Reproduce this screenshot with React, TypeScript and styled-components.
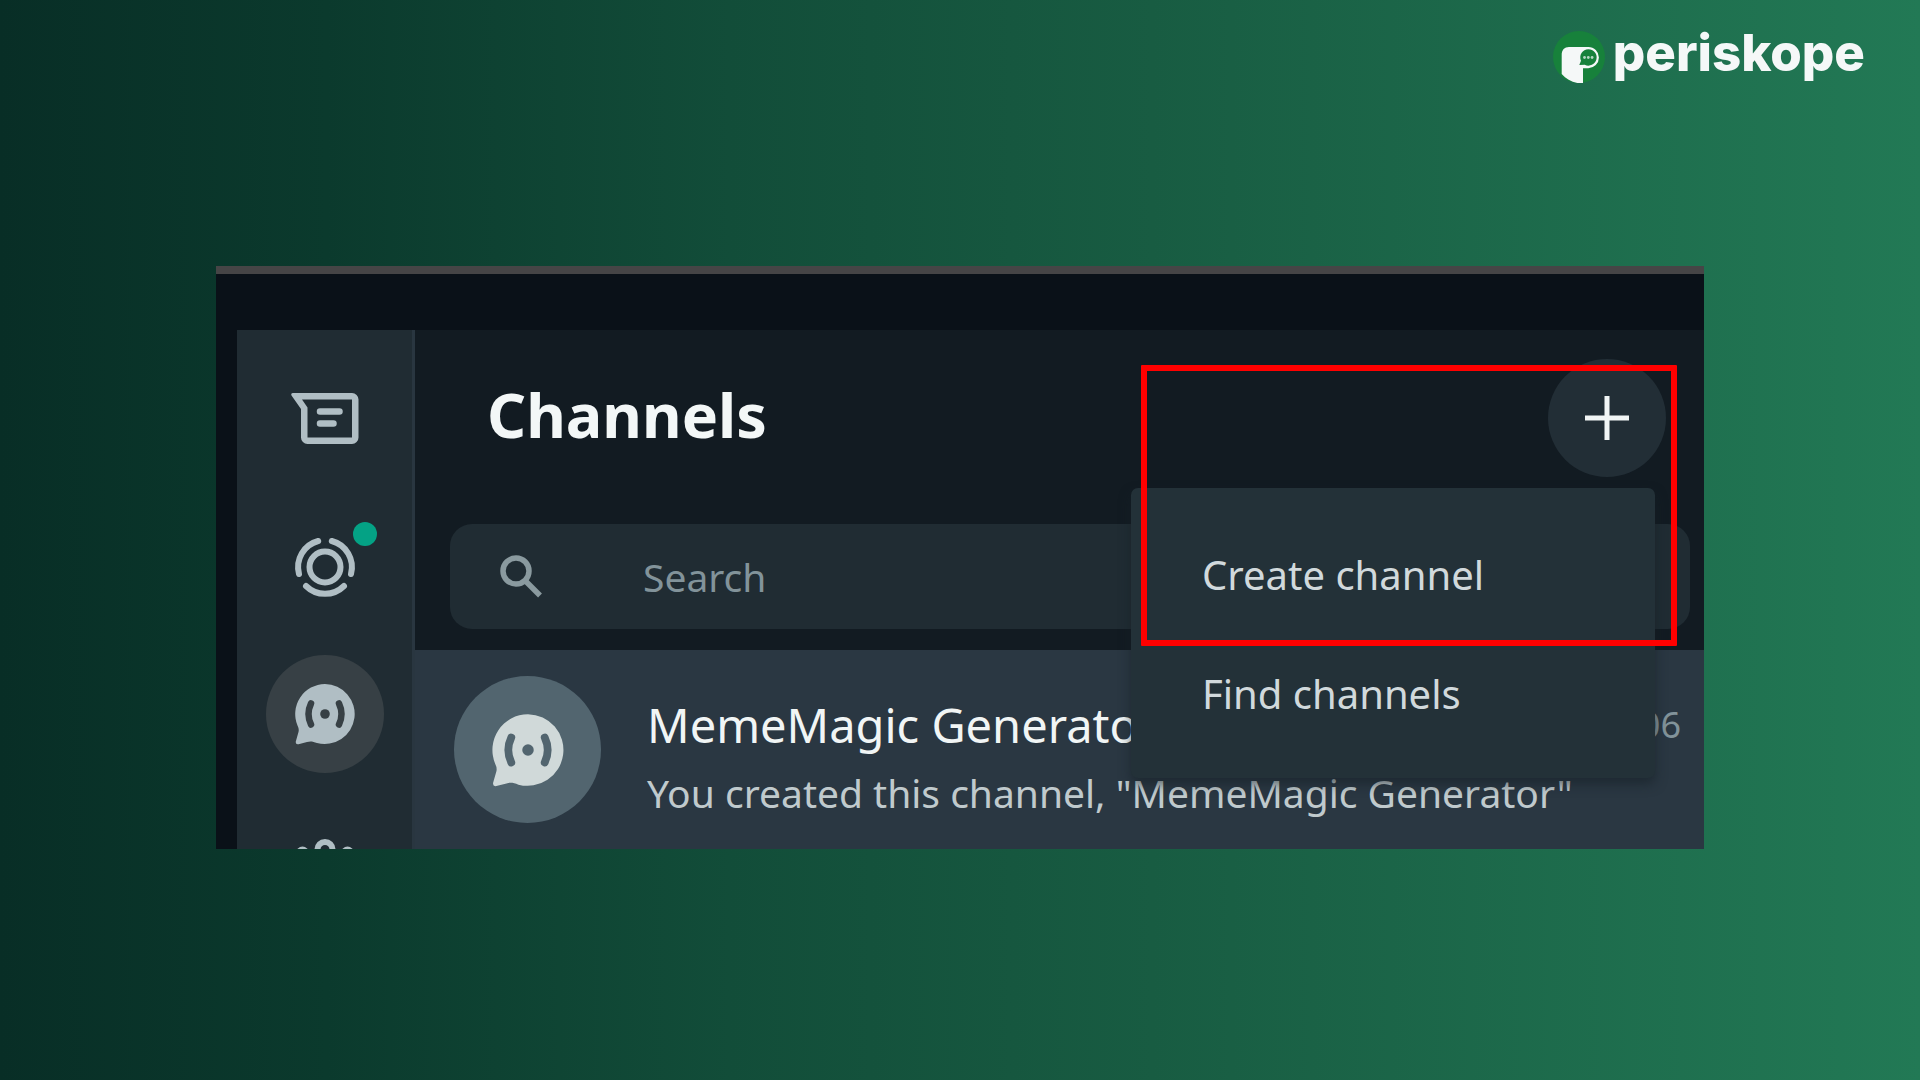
import React from "react";
import styled, { createGlobalStyle } from "styled-components";

const GlobalStyle = createGlobalStyle`
  *, *::before, *::after { box-sizing: border-box; }
  body {
    margin: 0;
    background: #0a3128;
    font-family: "Noto Sans", "Open Sans", sans-serif;
  }
  button { border: 0; padding: 0; background: none; font: inherit; color: inherit; cursor: pointer; }
  h1, h2, p { margin: 0; }
`;

const Page = styled.main`
  min-height: 100vh;
  display: flex;
  flex-direction: column;
  gap: 183px;
  padding: 31px 0;
  background: linear-gradient(90deg, #082e26 0%, #0b3a2d 17%, #124d39 38%, #185c42 60%, #227955 100%);
`;

const Brand = styled.header`
  display: flex;
  justify-content: flex-end;
  align-items: flex-start;
  gap: 8px;
  padding: 0 55px;
`;

const BrandName = styled.span`
  font-family: Inter, sans-serif;
  font-weight: 800;
  font-size: 51px;
  line-height: 44px;
  color: #f5f8f8;
`;

const Frame = styled.section`
  margin: 0 216px;
  border-top: 8px solid #464546;
  background: #0a1118;
  padding: 56px 0 0 21px;
  display: flex;
  overflow: hidden;
`;

const Nav = styled.nav`
  contain: size;
  flex: none;
  width: 178px;
  border-right: 3px solid #293640;
  background: #202c33;
  color: #b0bec4;
  display: flex;
  flex-direction: column;
  align-items: center;
  gap: 30px;
  padding-top: 29px;
`;

const RoundButton = styled.button<{ $fill?: string }>`
  position: relative;
  flex: none;
  width: 118px;
  height: 118px;
  border-radius: 50%;
  background: ${(p) => p.$fill ?? "transparent"};
  display: grid;
  place-items: center;
`;

const UnreadDot = styled.span`
  position: absolute;
  top: 15px;
  right: 7px;
  width: 24px;
  height: 24px;
  border-radius: 50%;
  background: #04a285;
`;

const Panel = styled.div`
  flex: 1;
  min-width: 0;
  background: #121b22;
`;

const PanelHeader = styled.div`
  display: flex;
  justify-content: space-between;
  align-items: flex-start;
  padding: 29px 38px 29px 72px;
`;

const Title = styled.h1`
  font-size: 61px;
  line-height: 112px;
  font-weight: 700;
  color: #f3f7f7;
`;

const MenuAnchor = styled.div`
  position: relative;
  z-index: 1;
  color: #f1f5f5;
`;

const Menu = styled.div`
  position: absolute;
  top: 129px;
  right: 11px;
  width: 524px;
  padding: 27px 0 25px;
  border-radius: 7px;
  background: #233138;
  box-shadow: 0 6px 12px rgba(22, 32, 38, 0.6);
`;

const MenuItem = styled.button`
  display: block;
  width: 100%;
  padding: 0 71px;
  text-align: left;
  font-size: 40px;
  line-height: 119px;
  color: #d1d9dc;
`;

const Highlight = styled.div`
  position: absolute;
  top: 6px;
  right: -11px;
  width: 536px;
  height: 281px;
  border: 6px solid #ff0000;
  border-radius: 1px;
  pointer-events: none;
`;

const SearchBox = styled.label`
  display: flex;
  align-items: center;
  gap: 98px;
  height: 105px;
  margin: 18px 14px 21px 35px;
  padding: 0 47px;
  border-radius: 22px;
  background: #202c33;
  color: #8a9a9f;
`;

const SearchInput = styled.input`
  flex: 1;
  min-width: 0;
  border: 0;
  outline: 0;
  padding: 0;
  background: transparent;
  font: inherit;
  font-size: 39px;
  color: #d1d9dc;
  &::placeholder { color: #82939a; opacity: 1; }
`;

const ChannelRow = styled.article`
  display: flex;
  align-items: center;
  gap: 46px;
  padding: 26px 23px 26px 39px;
  background: #2a3742;
`;

const Avatar = styled.span`
  flex: none;
  width: 147px;
  height: 147px;
  border-radius: 50%;
  background: #52656f;
  color: #d0d9d9;
  display: grid;
  place-items: center;
`;

const ChannelText = styled.div`
  flex: 1;
  min-width: 0;
  display: flex;
  flex-direction: column;
  gap: 10px;
  padding-top: 12px;
`;

const ChannelHead = styled.div`
  display: flex;
  align-items: center;
  justify-content: space-between;
`;

const ChannelName = styled.h2`
  font-size: 47px;
  line-height: 64px;
  font-weight: 400;
  color: #f1f5f5;
`;

const Time = styled.time`
  font-size: 36px;
  line-height: 56px;
  color: #82939a;
`;

const LastMessage = styled.p`
  font-size: 39px;
  line-height: 52px;
  white-space: nowrap;
  color: #c0cacd;
`;

const BrandMark = () => (
  <svg width="52" height="52" viewBox="0 0 52 52" aria-hidden="true">
    <circle cx="26" cy="26" r="26" fill="#17813b" />
    <path
      fill="#f5f8f8"
      d="M16 16H35.3a10.6 10.6 0 0 1 0 21.2H30V52.5C21 52.5 14 49 8.700 43V23.5C8.7 19 11.500 16 16 16Z"
    />
    <path fill="#17813b" d="M35.300 18.200a8.200 8.200 0 1 1-3.600 15.500L26.300 34l1.700-4.200a8.200 8.200 0 0 1 7.300-11.600Z" />
    <g fill="#b5d6c2">
      <circle cx="31.500" cy="26.500" r="1.400" />
      <circle cx="35.300" cy="26.500" r="1.400" />
      <circle cx="39.100" cy="26.500" r="1.400" />
    </g>
  </svg>
);

const ChatsIcon = () => (
  <svg width="72" height="72" viewBox="0 0 72 72" fill="none" aria-hidden="true">
    <path
      fill="currentColor"
      fillRule="evenodd"
      d="M4 11H63a6.500 6.500 0 0 1 6.500 6.500V55.500a6.500 6.500 0 0 1-6.500 6.500H18.500a6.500 6.500 0 0 1-6.500-6.500V27L2.500 13.500Q1.500 11 4 11ZM13 17.500 18.500 25.500V55.500H63V17.500Z"
    />
    <path stroke="currentColor" strokeWidth="6.500" strokeLinecap="round" d="M31 29.500H50.500M31 41.500H44.500" />
  </svg>
);

const StatusIcon = () => (
  <svg width="72" height="72" viewBox="0 0 72 72" fill="none" stroke="currentColor" strokeWidth="6" strokeLinecap="round" aria-hidden="true">
    <circle cx="36" cy="37" r="15.500" />
    <path d="M29.200 11A27 27 0 0 0 10 44" />
    <path d="M42.800 11A27 27 0 0 1 62 44" />
    <path d="M17 56A27 27 0 0 0 55 56" />
  </svg>
);

const ChannelsIcon = ({ size, ink }: { size: number; ink: string }) => (
  <svg width={size} height={size} viewBox="0 0 72 72" fill="none" aria-hidden="true">
    <path
      fill="currentColor"
      d="M36 6a30 30 0 1 1-8 59C24 63.500 21.500 63 18 64L9.500 66.200Q6.300 66.700 6.800 63.500L9.500 54Q10.300 51 8.500 47.500A30 30 0 0 1 36 6Z"
    />
    <path stroke={ink} strokeWidth="6.500" strokeLinecap="round" d="M22 25.500Q17 36 22 46.500M50 25.500Q55 36 50 46.500" />
    <circle cx="36" cy="36" r="4.800" fill={ink} />
  </svg>
);

const CommunitiesIcon = () => (
  <svg width="72" height="72" viewBox="0 0 72 72" fill="none" stroke="currentColor" strokeWidth="6" aria-hidden="true">
    <circle cx="36" cy="23.500" r="7.500" />
    <circle cx="13.500" cy="27" r="3.500" />
    <circle cx="58.500" cy="27" r="3.500" />
    <path d="M20 56v-5q0-10 16-10t16 10v5ZM20 56H5v-5q0-7 10-8M52 56h15v-5q0-7-10-8" />
  </svg>
);

const SearchIcon = () => (
  <svg width="48" height="48" viewBox="0 0 48 48" fill="none" stroke="currentColor" strokeWidth="5.500" aria-hidden="true">
    <circle cx="19" cy="18" r="13" />
    <path d="M28 27.500 43 42.500" />
  </svg>
);

const PlusIcon = () => (
  <svg width="44" height="44" viewBox="0 0 44 44" fill="none" stroke="currentColor" strokeWidth="5" aria-hidden="true">
    <path d="M22 0V44M0 22H44" />
  </svg>
);

export default function App() {
  return (
    <>
      <GlobalStyle />
      <Page>
        <Brand>
          <BrandMark />
          <BrandName>periskope</BrandName>
        </Brand>
        <Frame>
          <Nav>
            <RoundButton aria-label="Chats">
              <ChatsIcon />
            </RoundButton>
            <RoundButton aria-label="Status">
              <StatusIcon />
              <UnreadDot />
            </RoundButton>
            <RoundButton aria-label="Channels" $fill="#374045">
              <ChannelsIcon size={72} ink="#374045" />
            </RoundButton>
            <RoundButton aria-label="Communities">
              <CommunitiesIcon />
            </RoundButton>
          </Nav>
          <Panel>
            <PanelHeader>
              <Title>Channels</Title>
              <MenuAnchor>
                <RoundButton aria-label="New" $fill="#222e36">
                  <PlusIcon />
                </RoundButton>
                <Menu>
                  <MenuItem>Create channel</MenuItem>
                  <MenuItem>Find channels</MenuItem>
                </Menu>
                <Highlight />
              </MenuAnchor>
            </PanelHeader>
            <SearchBox>
              <SearchIcon />
              <SearchInput type="text" placeholder="Search" aria-label="Search" />
            </SearchBox>
            <ChannelRow>
              <Avatar>
                <ChannelsIcon size={86} ink="#52656f" />
              </Avatar>
              <ChannelText>
                <ChannelHead>
                  <ChannelName>MemeMagic Generator</ChannelName>
                  <Time>06</Time>
                </ChannelHead>
                <LastMessage>You created this channel, "MemeMagic Generator"</LastMessage>
              </ChannelText>
            </ChannelRow>
          </Panel>
        </Frame>
      </Page>
    </>
  );
}
